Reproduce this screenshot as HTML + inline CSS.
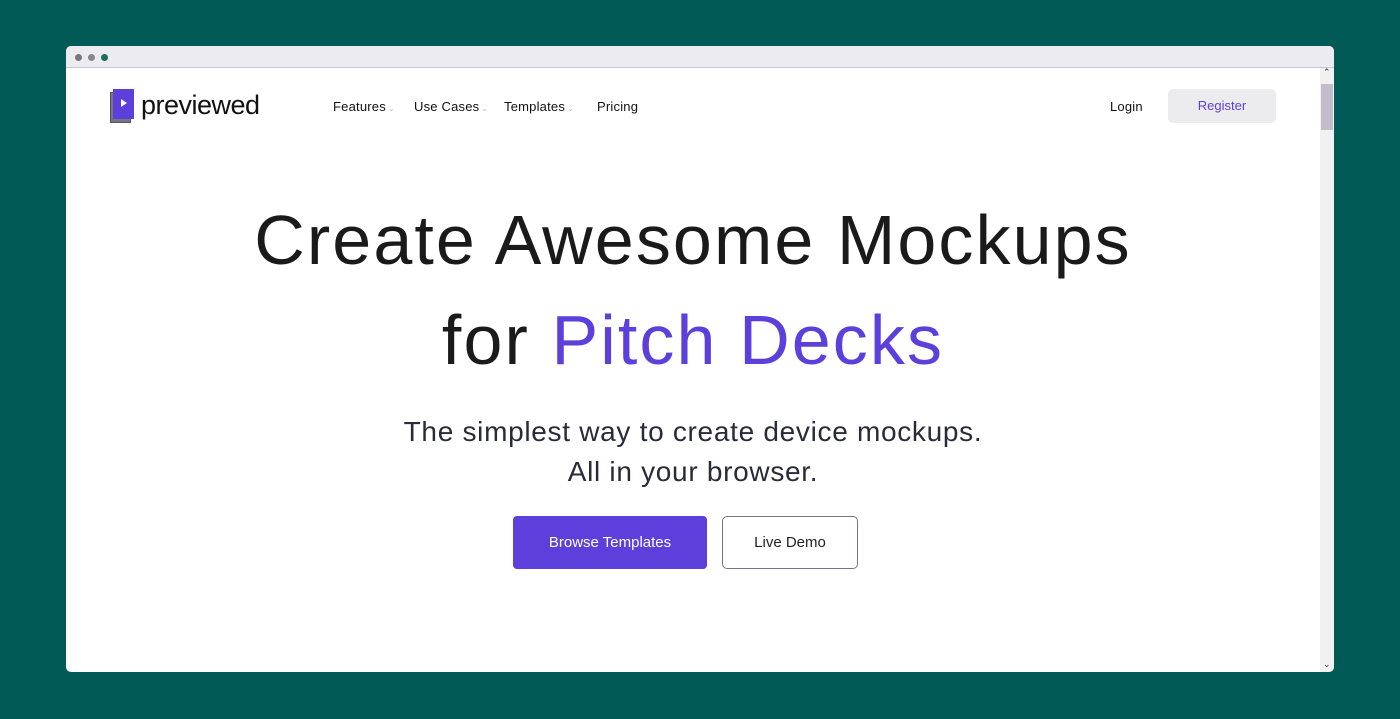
<!DOCTYPE html>
<html><head><meta charset="utf-8"><style>
*{margin:0;padding:0;box-sizing:border-box}
body{width:1400px;height:719px;background:#015a55;font-family:"Liberation Sans",sans-serif;position:relative;overflow:hidden}
.win{position:absolute;left:66px;top:46px;width:1268px;height:626px;background:#fff;border-radius:5px;overflow:hidden}
.bar{height:22px;background:#ececf0;border-bottom:1px solid #c9c5d8;position:relative}
.dot{position:absolute;top:8px;width:7px;height:7px;border-radius:50%}
.sb{position:absolute;right:0;top:22px;width:14px;bottom:0;background:#f1f1f1}
.thumb{position:absolute;left:1px;top:16px;width:12px;height:46px;background:#c1bdcc}
.abs{position:absolute;white-space:nowrap}
.nav{font-size:13px;color:#111;top:53px;letter-spacing:0.2px}
.car{color:#bbb;font-size:8px;margin-left:2px}
</style></head><body>
<div class="win">
 <div class="bar">
  <div class="dot" style="left:9px;background:#777"></div>
  <div class="dot" style="left:22px;background:#888"></div>
  <div class="dot" style="left:35px;background:#1a6e5e"></div>
 </div>
 <div class="sb"><div class="abs" style="left:3px;top:-1px;font-size:9px;color:#333">&#8963;</div><div class="thumb"></div><div class="abs" style="left:3px;bottom:2px;font-size:9px;color:#333">&#8964;</div></div>
 <div class="abs" style="left:44px;top:46px;width:21px;height:31px;background:#77748a;border:1px solid #555"></div>
 <div class="abs" style="left:47px;top:43px;width:21px;height:30px;background:#5d3fdc"></div>
 <div class="abs" style="left:55px;top:53px;width:0;height:0;border-left:6px solid #fff;border-top:4px solid transparent;border-bottom:4px solid transparent"></div>
 <div class="abs" style="left:75px;top:44px;font-size:27px;color:#111;letter-spacing:-0.5px">previewed</div>
 <div class="abs nav" style="left:267px">Features<span class="car">&#8964;</span></div>
 <div class="abs nav" style="left:348px">Use Cases<span class="car">&#8964;</span></div>
 <div class="abs nav" style="left:438px">Templates<span class="car">&#8964;</span></div>
 <div class="abs nav" style="left:531px">Pricing</div>
 <div class="abs nav" style="left:1044px">Login</div>
 <div class="abs" style="left:1102px;top:43px;width:108px;height:34px;background:#ececee;border-radius:5px;color:#5d3fdc;font-size:13px;text-align:center;line-height:34px">Register</div>
 <div class="abs" style="left:0;width:1254px;text-align:center;top:154px;font-size:70px;color:#1a1a1a;line-height:80px;letter-spacing:2.1px">Create Awesome Mockups</div>
 <div class="abs" style="left:0;width:1254px;text-align:center;top:254px;font-size:70px;color:#1a1a1a;line-height:80px;letter-spacing:2.1px">for <span style="color:#5d3fdc">Pitch Decks</span></div>
 <div class="abs" style="left:0;width:1254px;text-align:center;top:366px;font-size:28px;color:#2a2a3a;line-height:40px;letter-spacing:0.7px">The simplest way to create device mockups.<br>All in your browser.</div>
 <div class="abs" style="left:447px;top:470px;width:194px;height:53px;background:#5d3fdc;border-radius:4px;color:#fff;font-size:15px;text-align:center;line-height:53px">Browse Templates</div>
 <div class="abs" style="left:656px;top:470px;width:136px;height:53px;border:1px solid #77748a;border-radius:5px;color:#222;font-size:15px;text-align:center;line-height:51px">Live Demo</div>
</div>
</body></html>
